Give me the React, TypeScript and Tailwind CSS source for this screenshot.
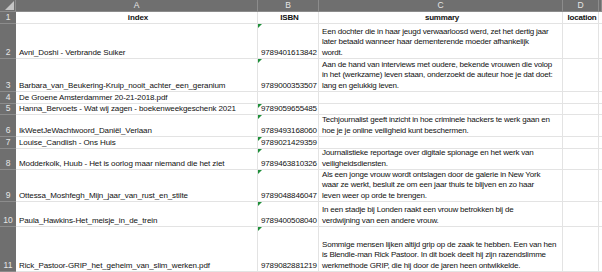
import React from "react";

type Row = {
  n: number;
  a: string;
  b: string;
  c: string[];
  d?: string;
  tri?: boolean;
  header?: boolean;
};

const rows: Row[] = [
  { n: 1, a: "index", b: "ISBN", c: ["summary"], d: "location", header: true },
  {
    n: 2,
    a: "Avni_Doshi - Verbrande Suiker",
    b: "9789401613842",
    c: [
      "Een dochter die in haar jeugd verwaarloosd werd, zet het dertig jaar",
      "later betaald wanneer haar dementerende moeder afhankelijk",
      "wordt.",
    ],
    tri: true,
  },
  {
    n: 3,
    a: "Barbara_van_Beukering-Kruip_nooit_achter_een_geranium",
    b: "9789000353507",
    c: [
      "Aan de hand van interviews met oudere, bekende vrouwen die volop",
      "in het (werkzame) leven staan, onderzoekt de auteur hoe je dat doet:",
      "lang en gelukkig leven.",
    ],
    tri: true,
  },
  { n: 4, a: "De Groene Amsterdammer 20-21-2018.pdf", b: "", c: [] },
  {
    n: 5,
    a: "Hanna_Bervoets - Wat wij zagen - boekenweekgeschenk 2021",
    b: "9789059655485",
    c: [],
    tri: true,
  },
  {
    n: 6,
    a: "IkWeetJeWachtwoord_Daniël_Verlaan",
    b: "9789493168060",
    c: [
      "Techjournalist geeft inzicht in hoe criminele hackers te werk gaan en",
      "hoe je je online veiligheid kunt beschermen.",
    ],
    tri: true,
  },
  { n: 7, a: "Louise_Candlish - Ons Huis", b: "9789021429359", c: [], tri: true },
  {
    n: 8,
    a: "Modderkolk, Huub - Het is oorlog maar niemand die het ziet",
    b: "9789463810326",
    c: [
      "Journalistieke reportage over digitale spionage en het werk van",
      "veiligheidsdiensten.",
    ],
    tri: true,
  },
  {
    n: 9,
    a: "Ottessa_Moshfegh_Mijn_jaar_van_rust_en_stilte",
    b: "9789048846047",
    c: [
      "Als een jonge vrouw wordt ontslagen door de galerie in New York",
      "waar ze werkt, besluit ze om een jaar thuis te blijven en zo haar",
      "leven weer op orde te brengen.",
    ],
    tri: true,
  },
  {
    n: 10,
    a: "Paula_Hawkins-Het_meisje_in_de_trein",
    b: "9789400508040",
    c: [
      "In een stadje bij Londen raakt een vrouw betrokken bij de",
      "verdwijning van een andere vrouw.",
    ],
    tri: true,
  },
  {
    n: 11,
    a: "Rick_Pastoor-GRIP_het_geheim_van_slim_werken.pdf",
    b: "9789082881219",
    c: [
      "Sommige mensen lijken altijd grip op de zaak te hebben. Een van hen",
      "is Blendle-man Rick Pastoor. In dit boek deelt hij zijn razendslimme",
      "werkmethode GRIP, die hij door de jaren heen ontwikkelde.",
    ],
    tri: true,
  },
];

const cell =
  "relative flex items-end overflow-hidden whitespace-nowrap border-r border-b border-[#e3e3e3] pl-[3px]";

export default function App() {
  return (
    <div className="w-[602px] h-[272px] overflow-hidden bg-white text-[#111] font-['Liberation_Sans',sans-serif] text-[8px] leading-[11.5px]">
      <div className="grid grid-cols-[16px_242px_61px_244px_36px_3px] grid-rows-[12px_12px_35px_33px_12px_11px_22px_12px_21px_32px_25px_45px]">
        {/* column header row */}
        <div className="relative bg-[#6f6f6f] border-r border-b border-[#8c8c8c]">
          <div className="absolute right-[1px] bottom-[1px] w-0 h-0 border-l-[9px] border-l-transparent border-b-[9px] border-b-[#c4c4c4]" />
        </div>
        {["A", "B", "C", "D", ""].map((l, i) => (
          <div
            key={i}
            className="flex items-center justify-center bg-[#6f6f6f] border-r border-b border-[#8c8c8c] text-[#e6e6e6] text-[8.5px]"
          >
            {l}
          </div>
        ))}
        {rows.map((r) => (
          <React.Fragment key={r.n}>
            <div className="flex items-end justify-center bg-[#6f6f6f] border-b border-[#8c8c8c] text-[#e6e6e6] text-[8.5px] leading-[11px]">
              {r.n}
            </div>
            <div
              className={`${cell} tracking-[-0.1px] ${r.header ? "justify-center font-bold pl-0" : ""}`}
            >
              {r.a}
            </div>
            <div
              className={`${cell} tracking-[-0.15px] ${r.header ? "justify-center font-bold pl-0" : "pl-[1px]"}`}
            >
              {r.tri && (
                <div className="absolute left-0 top-0 w-0 h-0 border-t-[4px] border-t-[#1f8f3a] border-r-[4px] border-r-transparent" />
              )}
              {r.b}
            </div>
            <div
              className={`${cell} tracking-[-0.2px] ${r.header ? "justify-center font-bold pl-0 leading-[11.5px]" : "leading-[10.5px]"}`}
            >
              <div className="flex flex-col">
                {r.c.map((line, i) => (
                  <div key={i}>{line}</div>
                ))}
              </div>
            </div>
            <div
              className={`${cell} tracking-[-0.2px] ${r.header ? "justify-center font-bold pl-0" : ""}`}
            >
              {r.d ?? ""}
            </div>
            <div className={cell} />
          </React.Fragment>
        ))}
      </div>
    </div>
  );
}
